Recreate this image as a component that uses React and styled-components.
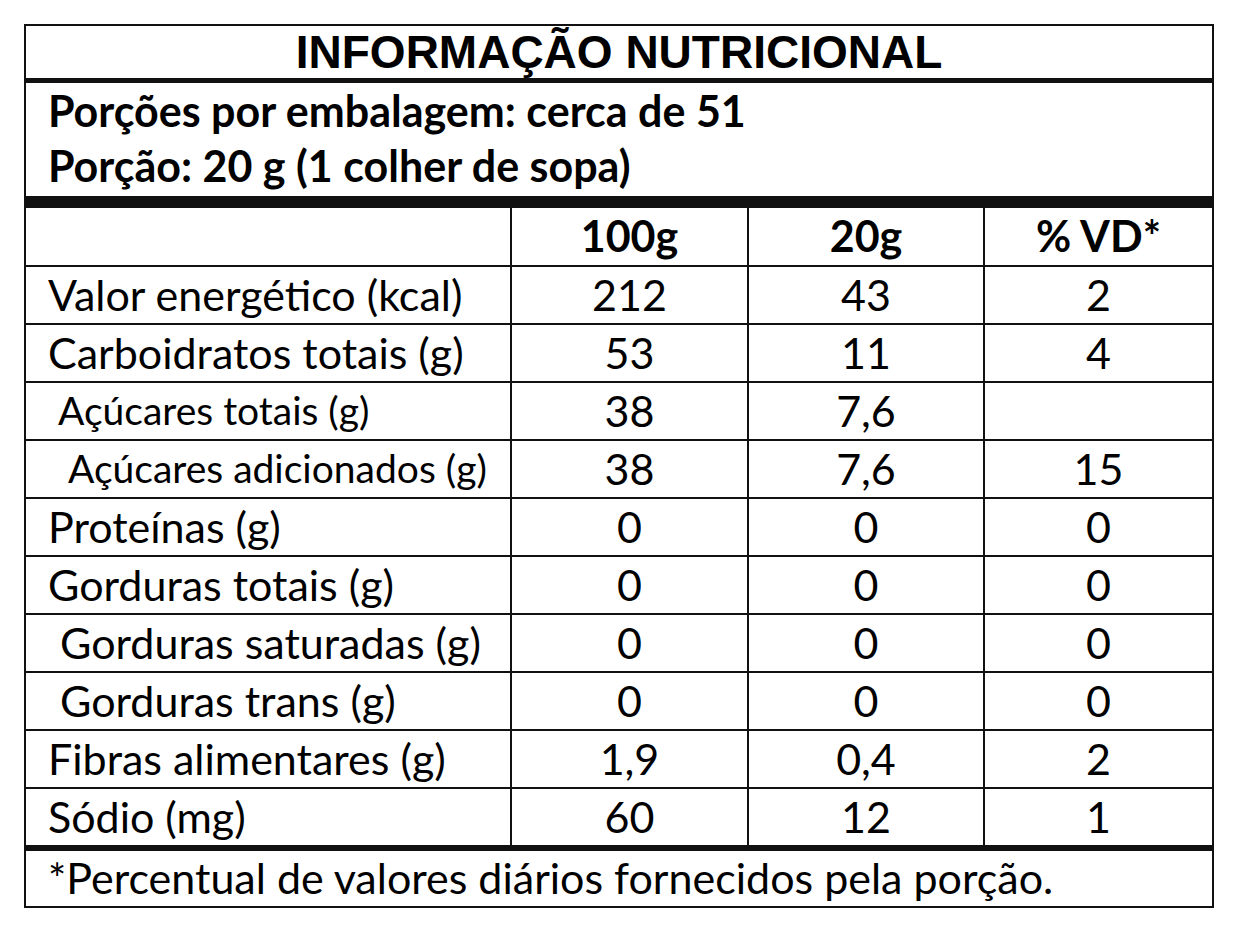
import React from 'react';
import styled, { createGlobalStyle } from 'styled-components';

const BODY_SIZE = 43;
const SMALL_SIZE = 39;
const LINE = '#111';

const GlobalStyle = createGlobalStyle`
  html, body {
    margin: 0;
    padding: 0;
    background: #fff;
  }
  body {
    font-family: Lato, 'Open Sans', sans-serif;
    color: #000;
  }
  * {
    box-sizing: border-box;
  }
`;

const Label = styled.section`
  width: 1190px;
  margin: 24px 0 0 24px;
  border: 2px solid ${LINE};
`;

const Title = styled.h1`
  margin: 0;
  height: 57px;
  border-bottom: 5px solid ${LINE};
  font-family: 'Liberation Sans', Arial, sans-serif;
  font-weight: 700;
  font-size: 46px;
  line-height: 52px;
  text-align: center;
`;

const Serving = styled.div`
  height: 125px;
  border-bottom: 12px solid ${LINE};
  padding: 0 0 0 22px;
  font-weight: 700;
  font-size: ${BODY_SIZE}px;
  line-height: 55px;

  p {
    margin: 0;
  }
`;

const Row = styled.div`
  display: grid;
  grid-template-columns: 484px 237px 236px 1fr;
  height: ${(p) => p.$height}px;
  border-bottom: ${(p) => p.$rule}px solid ${LINE};
  font-weight: ${(p) => (p.$head ? 700 : 400)};
`;

const Name = styled.div`
  display: flex;
  align-items: center;
  padding: 0 0 2px ${(p) => p.$indent}px;
  font-size: ${(p) => (p.$small ? SMALL_SIZE : BODY_SIZE)}px;
  white-space: nowrap;
`;

const Value = styled.div`
  display: flex;
  align-items: center;
  justify-content: center;
  padding-bottom: 2px;
  border-left: 2px solid ${LINE};
  font-size: ${BODY_SIZE}px;
`;

const Footnote = styled.p`
  margin: 0;
  height: 55px;
  display: flex;
  align-items: center;
  padding: 0 0 2px 22px;
  font-size: ${BODY_SIZE}px;
  white-space: nowrap;
`;

const nutrients = [
  { name: 'Valor energético (kcal)', g100: '212', portion: '43', vd: '2' },
  { name: 'Carboidratos totais (g)', g100: '53', portion: '11', vd: '4' },
  { name: 'Açúcares totais (g)', g100: '38', portion: '7,6', vd: '', indent: 32, small: true },
  { name: 'Açúcares adicionados (g)', g100: '38', portion: '7,6', vd: '15', indent: 42, small: true },
  { name: 'Proteínas (g)', g100: '0', portion: '0', vd: '0' },
  { name: 'Gorduras totais (g)', g100: '0', portion: '0', vd: '0' },
  { name: 'Gorduras saturadas (g)', g100: '0', portion: '0', vd: '0', indent: 34 },
  { name: 'Gorduras trans (g)', g100: '0', portion: '0', vd: '0', indent: 34 },
  { name: 'Fibras alimentares (g)', g100: '1,9', portion: '0,4', vd: '2' },
  { name: 'Sódio (mg)', g100: '60', portion: '12', vd: '1' },
];

export default function App() {
  return (
    <>
      <GlobalStyle />
      <Label>
        <Title>INFORMAÇÃO NUTRICIONAL</Title>
        <Serving>
          <p>Porções por embalagem: cerca de 51</p>
          <p>Porção: 20 g (1 colher de sopa)</p>
        </Serving>
        <Row $height={59} $rule={2} $head>
          <Name $indent={22} />
          <Value>100g</Value>
          <Value>20g</Value>
          <Value>% VD*</Value>
        </Row>
        {nutrients.map((n, i) => (
          <Row key={n.name} $height={i === nutrients.length - 1 ? 62 : 58} $rule={i === nutrients.length - 1 ? 6 : 2}>
            <Name $indent={n.indent || 22} $small={n.small}>{n.name}</Name>
            <Value>{n.g100}</Value>
            <Value>{n.portion}</Value>
            <Value>{n.vd}</Value>
          </Row>
        ))}
        <Footnote>*Percentual de valores diários fornecidos pela porção.</Footnote>
      </Label>
    </>
  );
}
